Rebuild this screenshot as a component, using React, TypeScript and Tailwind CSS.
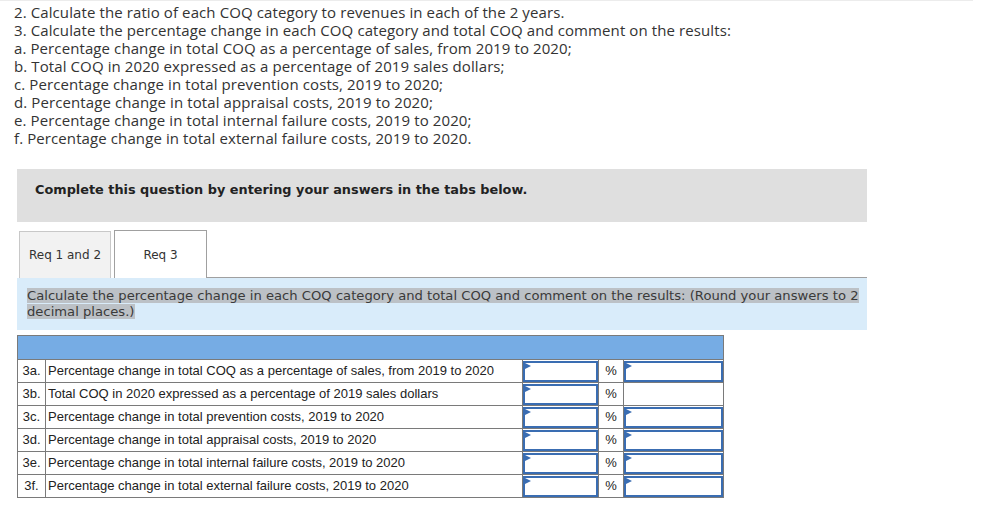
import React from "react";

const rows = [
  { k: "3a.", t: "Percentage change in total COQ as a percentage of sales, from 2019 to 2020", second: true },
  { k: "3b.", t: "Total COQ in 2020 expressed as a percentage of 2019 sales dollars", second: false },
  { k: "3c.", t: "Percentage change in total prevention costs, 2019 to 2020", second: true },
  { k: "3d.", t: "Percentage change in total appraisal costs, 2019 to 2020", second: true },
  { k: "3e.", t: "Percentage change in total internal failure costs, 2019 to 2020", second: true },
  { k: "3f.", t: "Percentage change in total external failure costs, 2019 to 2020", second: true },
];

function InputBox() {
  return (
    <div className="relative h-[21px] w-full border-2 border-[#3a6db2] bg-white">
      <div className="absolute left-0 top-0 h-0 w-0 border-y-[3px] border-l-[6px] border-y-transparent border-l-[#3a6db2]" />
    </div>
  );
}

export default function App() {
  return (
    <div className="min-h-[505px] w-[1008px] bg-white">
      <div
        className="w-[973px] border-t border-[#ececec] pl-[14px] pt-[2px] text-[15px] leading-[18px] tracking-[0.1px] text-[#333]"
        style={{ fontFamily: '"Open Sans", sans-serif' }}
      >
        <div>2. Calculate the ratio of each COQ category to revenues in each of the 2 years.</div>
        <div>3. Calculate the percentage change in each COQ category and total COQ and comment on the results:</div>
        <div>a. Percentage change in total COQ as a percentage of sales, from 2019 to 2020;</div>
        <div>b. Total COQ in 2020 expressed as a percentage of 2019 sales dollars;</div>
        <div>c. Percentage change in total prevention costs, 2019 to 2020;</div>
        <div>d. Percentage change in total appraisal costs, 2019 to 2020;</div>
        <div>e. Percentage change in total internal failure costs, 2019 to 2020;</div>
        <div>f. Percentage change in total external failure costs, 2019 to 2020.</div>
      </div>

      <div className="ml-[17px] mt-[22px] w-[850px]" style={{ fontFamily: '"DejaVu Sans", Verdana, sans-serif' }}>
        <div className="h-[53px] bg-[#dfdfdf] pl-[18px] pt-[13px] text-[12.85px] font-bold leading-[16px] text-[#222]">
          Complete this question by entering your answers in the tabs below.
        </div>

        <div className="mt-[8px] flex h-[48px] items-end">
          <div className="ml-[2px] flex h-[47px] w-[92px] items-center justify-center border border-b-0 border-[#c8c8c8] bg-[#f2f2f2] text-[12px] text-[#333]">
            Req 1 and 2
          </div>
          <div className="ml-[3px] flex h-[48px] w-[93px] items-center justify-center border border-b-0 border-[#a0a0a0] bg-white text-[12px] text-[#333]">
            Req 3
          </div>
          <div className="h-[1px] flex-1 self-end bg-[#a0a0a0]" />
        </div>

        <div className="h-[52px] bg-[#d9ecfa] pl-[10px] pt-[10px] text-[13.15px] leading-[16px] text-[#3a3a3a]">
          <span className="bg-[#bcc1c6]">
            Calculate the percentage change in each COQ category and total COQ and comment on the results: (Round your answers to 2
          </span>
          <br />
          <span className="bg-[#bcc1c6]">decimal places.)</span>
        </div>
      </div>

      <table
        className="ml-[17px] mt-[5px] border-collapse text-[13px] text-[#222]"
        style={{ fontFamily: '"Liberation Sans", Arial, sans-serif' }}
      >
        <colgroup>
          <col className="w-[28px]" />
          <col className="w-[477px]" />
          <col className="w-[76px]" />
          <col className="w-[25px]" />
          <col className="w-[100px]" />
        </colgroup>
        <tbody>
          <tr className="h-[24px] bg-[#76ace4]">
            <td colSpan={5} className="border border-[#7a7a7a]" />
          </tr>
          {rows.map((r) => (
            <tr key={r.k} className="h-[23px]">
              <td className="border border-[#7a7a7a] px-[2px] text-center">{r.k}</td>
              <td className="border border-[#7a7a7a] px-[2px]">{r.t}</td>
              <td className="border border-[#7a7a7a] p-0">
                <InputBox />
              </td>
              <td className="border border-[#7a7a7a] text-center">%</td>
              <td className="border border-[#7a7a7a] p-0">{r.second ? <InputBox /> : null}</td>
            </tr>
          ))}
        </tbody>
      </table>
    </div>
  );
}
